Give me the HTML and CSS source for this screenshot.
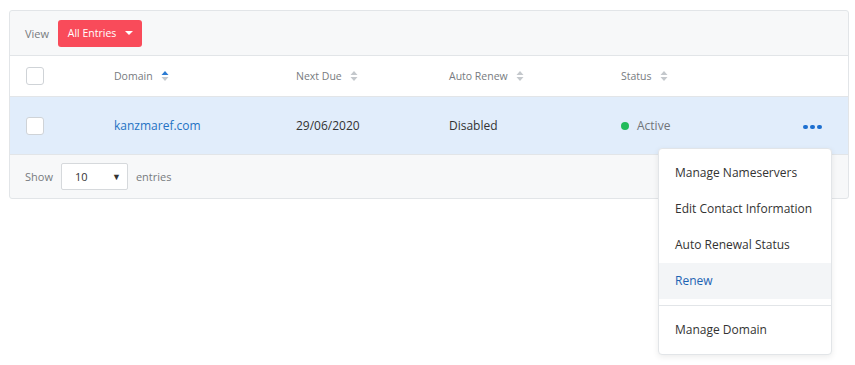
FILE: index.html
```html
<!DOCTYPE html>
<html lang="en">
<head>
    <meta charset="UTF-8">
    <title>My Domains</title>
    <link rel="stylesheet" href="styles.css">
</head>
<body>
<div class="page">
    <div class="panel">
        <div class="toolbar">
            <span class="muted">View</span>
            <button class="filter-btn">All Entries <span class="caret"></span></button>
        </div>
        <table class="domains">
            <thead>
                <tr>
                    <th class="col-check"><span class="check"></span></th>
                    <th class="col-domain">Domain
                        <svg class="sort" width="8" height="12" viewBox="0 0 8 12"><path d="M4 1 L7.5 5 H0.5 Z" fill="#2b7bd3"/><path d="M4 11 L7.5 7 H0.5 Z" fill="#c4c8cc"/></svg>
                    </th>
                    <th class="col-due">Next Due
                        <svg class="sort" width="8" height="12" viewBox="0 0 8 12"><path d="M4 1 L7.5 5 H0.5 Z" fill="#c4c8cc"/><path d="M4 11 L7.5 7 H0.5 Z" fill="#c4c8cc"/></svg>
                    </th>
                    <th class="col-renew">Auto Renew
                        <svg class="sort" width="8" height="12" viewBox="0 0 8 12"><path d="M4 1 L7.5 5 H0.5 Z" fill="#c4c8cc"/><path d="M4 11 L7.5 7 H0.5 Z" fill="#c4c8cc"/></svg>
                    </th>
                    <th class="col-status">Status
                        <svg class="sort" width="8" height="12" viewBox="0 0 8 12"><path d="M4 1 L7.5 5 H0.5 Z" fill="#c4c8cc"/><path d="M4 11 L7.5 7 H0.5 Z" fill="#c4c8cc"/></svg>
                    </th>
                    <th class="col-actions"></th>
                </tr>
            </thead>
            <tbody>
                <tr class="selected">
                    <td class="col-check"><span class="check"></span></td>
                    <td><a href="#" class="domain-link">kanzmaref.com</a></td>
                    <td>29/06/2020</td>
                    <td>Disabled</td>
                    <td><span class="status"><span class="dot"></span>Active</span></td>
                    <td class="col-actions"><span class="more"><i></i><i></i><i></i></span></td>
                </tr>
            </tbody>
        </table>
        <div class="footer">
            <span class="muted">Show</span>
            <div class="select">10 <span class="select-arrow">&#9660;</span></div>
            <span class="muted">entries</span>
        </div>
    </div>

    <ul class="menu">
        <li>Manage Nameservers</li>
        <li>Edit Contact Information</li>
        <li>Auto Renewal Status</li>
        <li class="active">Renew</li>
        <li class="divider"></li>
        <li>Manage Domain</li>
    </ul>
</div>
</body>
</html>
```

FILE: styles.css
```css
body {
    font-family: 'Open Sans', sans-serif;
    margin: 0;
    background-color: #FFFFFF;
    color: #333333;
}
.page {
    position: relative;
    min-height: 355px;
    padding: 10px 0 0 9px;
}
.panel {
    width: 838px;
    background-color: #f7f8f9;
    border: 1px solid #e2e5e8;
    border-radius: 3px;
}
.toolbar {
    height: 44px;
    display: flex;
    align-items: center;
    gap: 9px;
    padding: 0 15px;
    border-bottom: 1px solid #e2e5e8;
}
.muted {
    font-size: 11px;
    color: #777b80;
}
.filter-btn {
    font-family: 'Open Sans', sans-serif;
    background-color: #f94b5a;
    color: white;
    border: none;
    border-radius: 3px;
    height: 27px;
    width: 84px;
    font-size: 10.5px;
    padding: 0 0 0 1px;
    display: flex;
    align-items: center;
    justify-content: center;
    gap: 9px;
}
.caret {
    width: 0;
    height: 0;
    border-left: 4px solid transparent;
    border-right: 4px solid transparent;
    border-top: 4px solid white;
}

/* table */
.domains {
    width: 100%;
    border-collapse: collapse;
    table-layout: fixed;
}
.domains th {
    height: 40px;
    background-color: #FFFFFF;
    font-weight: normal;
    font-size: 10.5px;
    color: #777b80;
    text-align: left;
    padding: 0 16px;
    border-bottom: 1px solid #e2e5e8;
}
.domains td {
    height: 57px;
    font-size: 12px;
    padding: 0 16px;
    border-bottom: 1px solid #e2e5e8;
}
.domains tr.selected td {
    background-color: #e1edfb;
}
.col-check { width: 56px; }
.col-domain { width: 150px; }
.col-due { width: 121px; }
.col-renew { width: 140px; }
.col-status { width: 150px; }
.domains .col-actions {
    text-align: right;
    padding-right: 31px;
}
.check {
    display: block;
    width: 16px;
    height: 16px;
    border: 1px solid #cfd3d7;
    border-radius: 3px;
    background-color: #FFFFFF;
}
.sort {
    vertical-align: -2px;
    margin-left: 6px;
}
.domain-link {
    color: #2472c3;
    text-decoration: none;
}
.status {
    display: flex;
    align-items: center;
    gap: 8px;
    color: #707478;
}
.dot {
    width: 8px;
    height: 8px;
    border-radius: 50%;
    background-color: #22bb5b;
}
.more {
    display: inline-flex;
    gap: 2.5px;
    vertical-align: middle;
}
.more i {
    width: 4.5px;
    height: 4.5px;
    border-radius: 50%;
    background-color: #1d6fd0;
}

/* footer */
.footer {
    height: 43px;
    display: flex;
    align-items: center;
    padding: 0 15px;
    gap: 8px;
}
.select {
    box-sizing: border-box;
    width: 67px;
    height: 27px;
    background-color: #FFFFFF;
    border: 1px solid #d6d9dc;
    border-radius: 2px;
    font-size: 11px;
    display: flex;
    align-items: center;
    justify-content: space-between;
    padding: 0 6px 0 13px;
}
.select-arrow {
    font-size: 9px;
    color: #333333;
}

/* dropdown menu */
.menu {
    position: absolute;
    top: 148px;
    left: 658px;
    width: 172px;
    margin: 0;
    padding: 6px 0;
    list-style: none;
    background-color: #FFFFFF;
    border: 1px solid #e2e5e8;
    border-radius: 4px;
    box-shadow: 0 2px 6px rgba(0, 0, 0, 0.08);
}
.menu li {
    height: 36px;
    line-height: 36px;
    padding: 0 16px;
    font-size: 12px;
    color: #333333;
    white-space: nowrap;
}
.menu li.active {
    background-color: #f3f5f7;
    color: #1d63b3;
}
.menu li.divider {
    height: 1px;
    padding: 0;
    margin: 6px 0;
    background-color: #e2e5e8;
}
```
